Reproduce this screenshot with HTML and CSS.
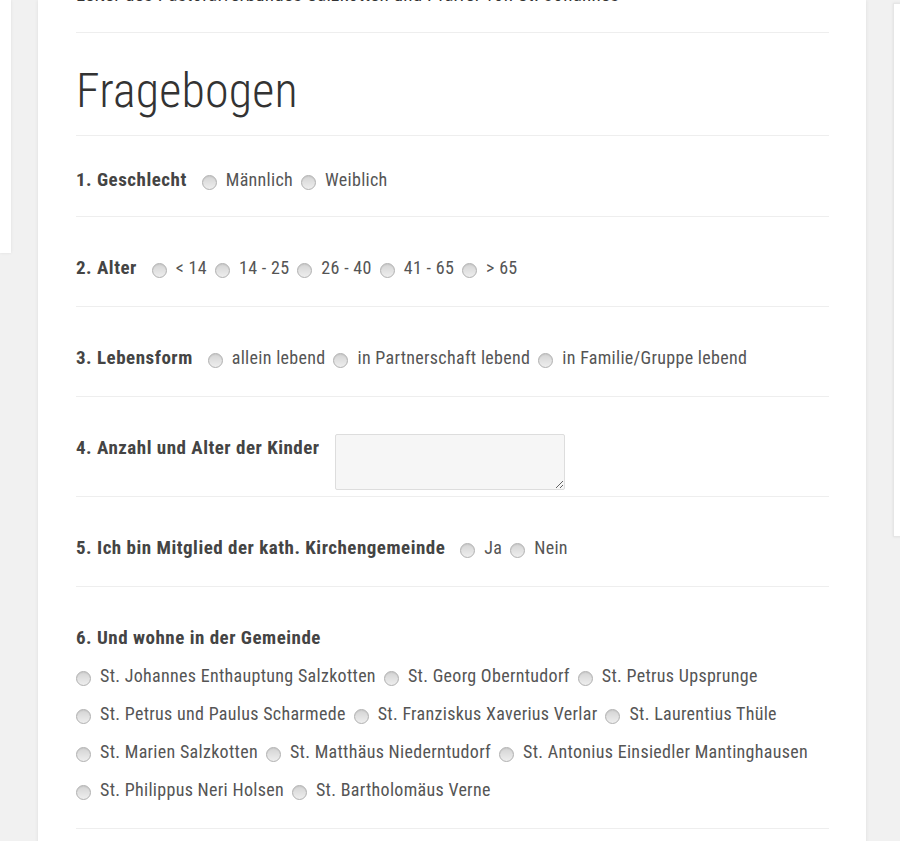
FILE: index.html
```html
<!DOCTYPE html>
<html>
<head>
<meta charset="utf-8" />
<title>Fragebogen</title>
<link rel="stylesheet" href="styles.css">
</head>
<body>
<div class="layout">
	<div class="side side_left"></div>
	<div class="card">
		<p class="intro">Leiter des Pastoralverbundes Salzkotten und Pfarrer von St. Johannes</p>
		<h1 class="title">Fragebogen</h1>
		<form class="quest">
			<div class="q q_first">
				<span class="q_label">1. Geschlecht</span>
				<div class="opts">
					<label class="opt"><input type="radio" name="g" class="radio">Männlich</label>
					<label class="opt"><input type="radio" name="g" class="radio">Weiblich</label>
				</div>
			</div>
			<div class="q">
				<span class="q_label">2. Alter</span>
				<div class="opts">
					<label class="opt"><input type="radio" name="a" class="radio">&lt; 14</label>
					<label class="opt"><input type="radio" name="a" class="radio">14 - 25</label>
					<label class="opt"><input type="radio" name="a" class="radio">26 - 40</label>
					<label class="opt"><input type="radio" name="a" class="radio">41 - 65</label>
					<label class="opt"><input type="radio" name="a" class="radio">&gt; 65</label>
				</div>
			</div>
			<div class="q">
				<span class="q_label">3. Lebensform</span>
				<div class="opts">
					<label class="opt"><input type="radio" name="l" class="radio">allein lebend</label>
					<label class="opt"><input type="radio" name="l" class="radio">in Partnerschaft lebend</label>
					<label class="opt"><input type="radio" name="l" class="radio">in Familie/Gruppe lebend</label>
				</div>
			</div>
			<div class="q q_area">
				<span class="q_label">4. Anzahl und Alter der Kinder</span>
				<textarea class="area"></textarea>
			</div>
			<div class="q">
				<span class="q_label">5. Ich bin Mitglied der kath. Kirchengemeinde</span>
				<div class="opts">
					<label class="opt"><input type="radio" name="m" class="radio">Ja</label>
					<label class="opt"><input type="radio" name="m" class="radio">Nein</label>
				</div>
			</div>
			<div class="q q_block">
				<span class="q_label">6. Und wohne in der Gemeinde</span>
				<div class="opts opts_line">
					<label class="opt"><input type="radio" name="p" class="radio">St. Johannes Enthauptung Salzkotten</label>
					<label class="opt"><input type="radio" name="p" class="radio">St. Georg Oberntudorf</label>
					<label class="opt"><input type="radio" name="p" class="radio">St. Petrus Upsprunge</label>
				</div>
				<div class="opts opts_line">
					<label class="opt"><input type="radio" name="p" class="radio">St. Petrus und Paulus Scharmede</label>
					<label class="opt"><input type="radio" name="p" class="radio">St. Franziskus Xaverius Verlar</label>
					<label class="opt"><input type="radio" name="p" class="radio">St. Laurentius Thüle</label>
				</div>
				<div class="opts opts_line">
					<label class="opt"><input type="radio" name="p" class="radio">St. Marien Salzkotten</label>
					<label class="opt"><input type="radio" name="p" class="radio">St. Matthäus Niederntudorf</label>
					<label class="opt"><input type="radio" name="p" class="radio">St. Antonius Einsiedler Mantinghausen</label>
				</div>
				<div class="opts opts_line">
					<label class="opt"><input type="radio" name="p" class="radio">St. Philippus Neri Holsen</label>
					<label class="opt"><input type="radio" name="p" class="radio">St. Bartholomäus Verne</label>
				</div>
			</div>
		</form>
	</div>
	<div class="side side_right"></div>
</div>
</body>
</html>
```

FILE: styles.css
```css
*{margin:0;padding:0;box-sizing:border-box;}
html,body{height:100%;overflow:hidden;}
body{
	background:#f1f1f1;
	font-family:"Roboto Condensed","Liberation Sans Narrow",Roboto,sans-serif;
	font-size:18px;
	letter-spacing:0.3px;
	color:#555;
}
.layout{
	display:flex;
	align-items:flex-start;
	gap:27px;
}
.layout > div{flex-shrink:0;}
.side{
	background:#fff;
	box-shadow:0 0 3px rgba(0,0,0,0.08);
}
.side_left{width:11px;height:253px;}
.side_right{width:10px;height:534px;margin-top:3px;border:1px solid #e6e6e6;}
.card{
	width:828px;
	min-height:900px;
	background:#fff;
	padding:0 37px 0 38px;
	box-shadow:0 0 4px rgba(0,0,0,0.08);
}
.intro{
	margin-top:-17px;
	font-size:19px;
	line-height:24px;
	padding-bottom:25px;
	border-bottom:1px solid #eee;
	color:#333;
}
.title{
	font-weight:300;
	font-size:48px;
	letter-spacing:0.2px;
	line-height:53px;
	color:#333;
	padding:31px 0 18px;
	border-bottom:1px solid #eee;
}
.q{
	display:flex;
	align-items:center;
	padding:37px 0 24px;
	border-bottom:1px solid #eee;
}
.q_first{padding-top:30px;padding-bottom:22px;}
.q_area{align-items:flex-start;padding-bottom:6px;}
.q_block{display:block;padding-bottom:24px;}
.q_label{
	font-weight:bold;
	font-size:19px;
	letter-spacing:0.5px;
	color:#444;
	line-height:28px;
	margin-right:15px;
}
.opts{
	display:flex;
	gap:8px;
	line-height:28px;
}
.opts_line{margin-top:10px;}
.opt{
	display:flex;
	align-items:center;
	gap:9px;
}
.radio{
	-webkit-appearance:none;
	appearance:none;
	width:15px;
	height:15px;
	margin-top:4px;
	border-radius:50%;
	border:1px solid #b0b0b0;
	background:linear-gradient(#d4d4d4,#eeeeee);
	box-shadow:inset 0 1px 1px rgba(0,0,0,0.06);
}
.area{
	width:230px;
	height:56px;
	background:#f6f6f6;
	border:1px solid #ddd;
	border-radius:2px;
	font:inherit;
}
```
